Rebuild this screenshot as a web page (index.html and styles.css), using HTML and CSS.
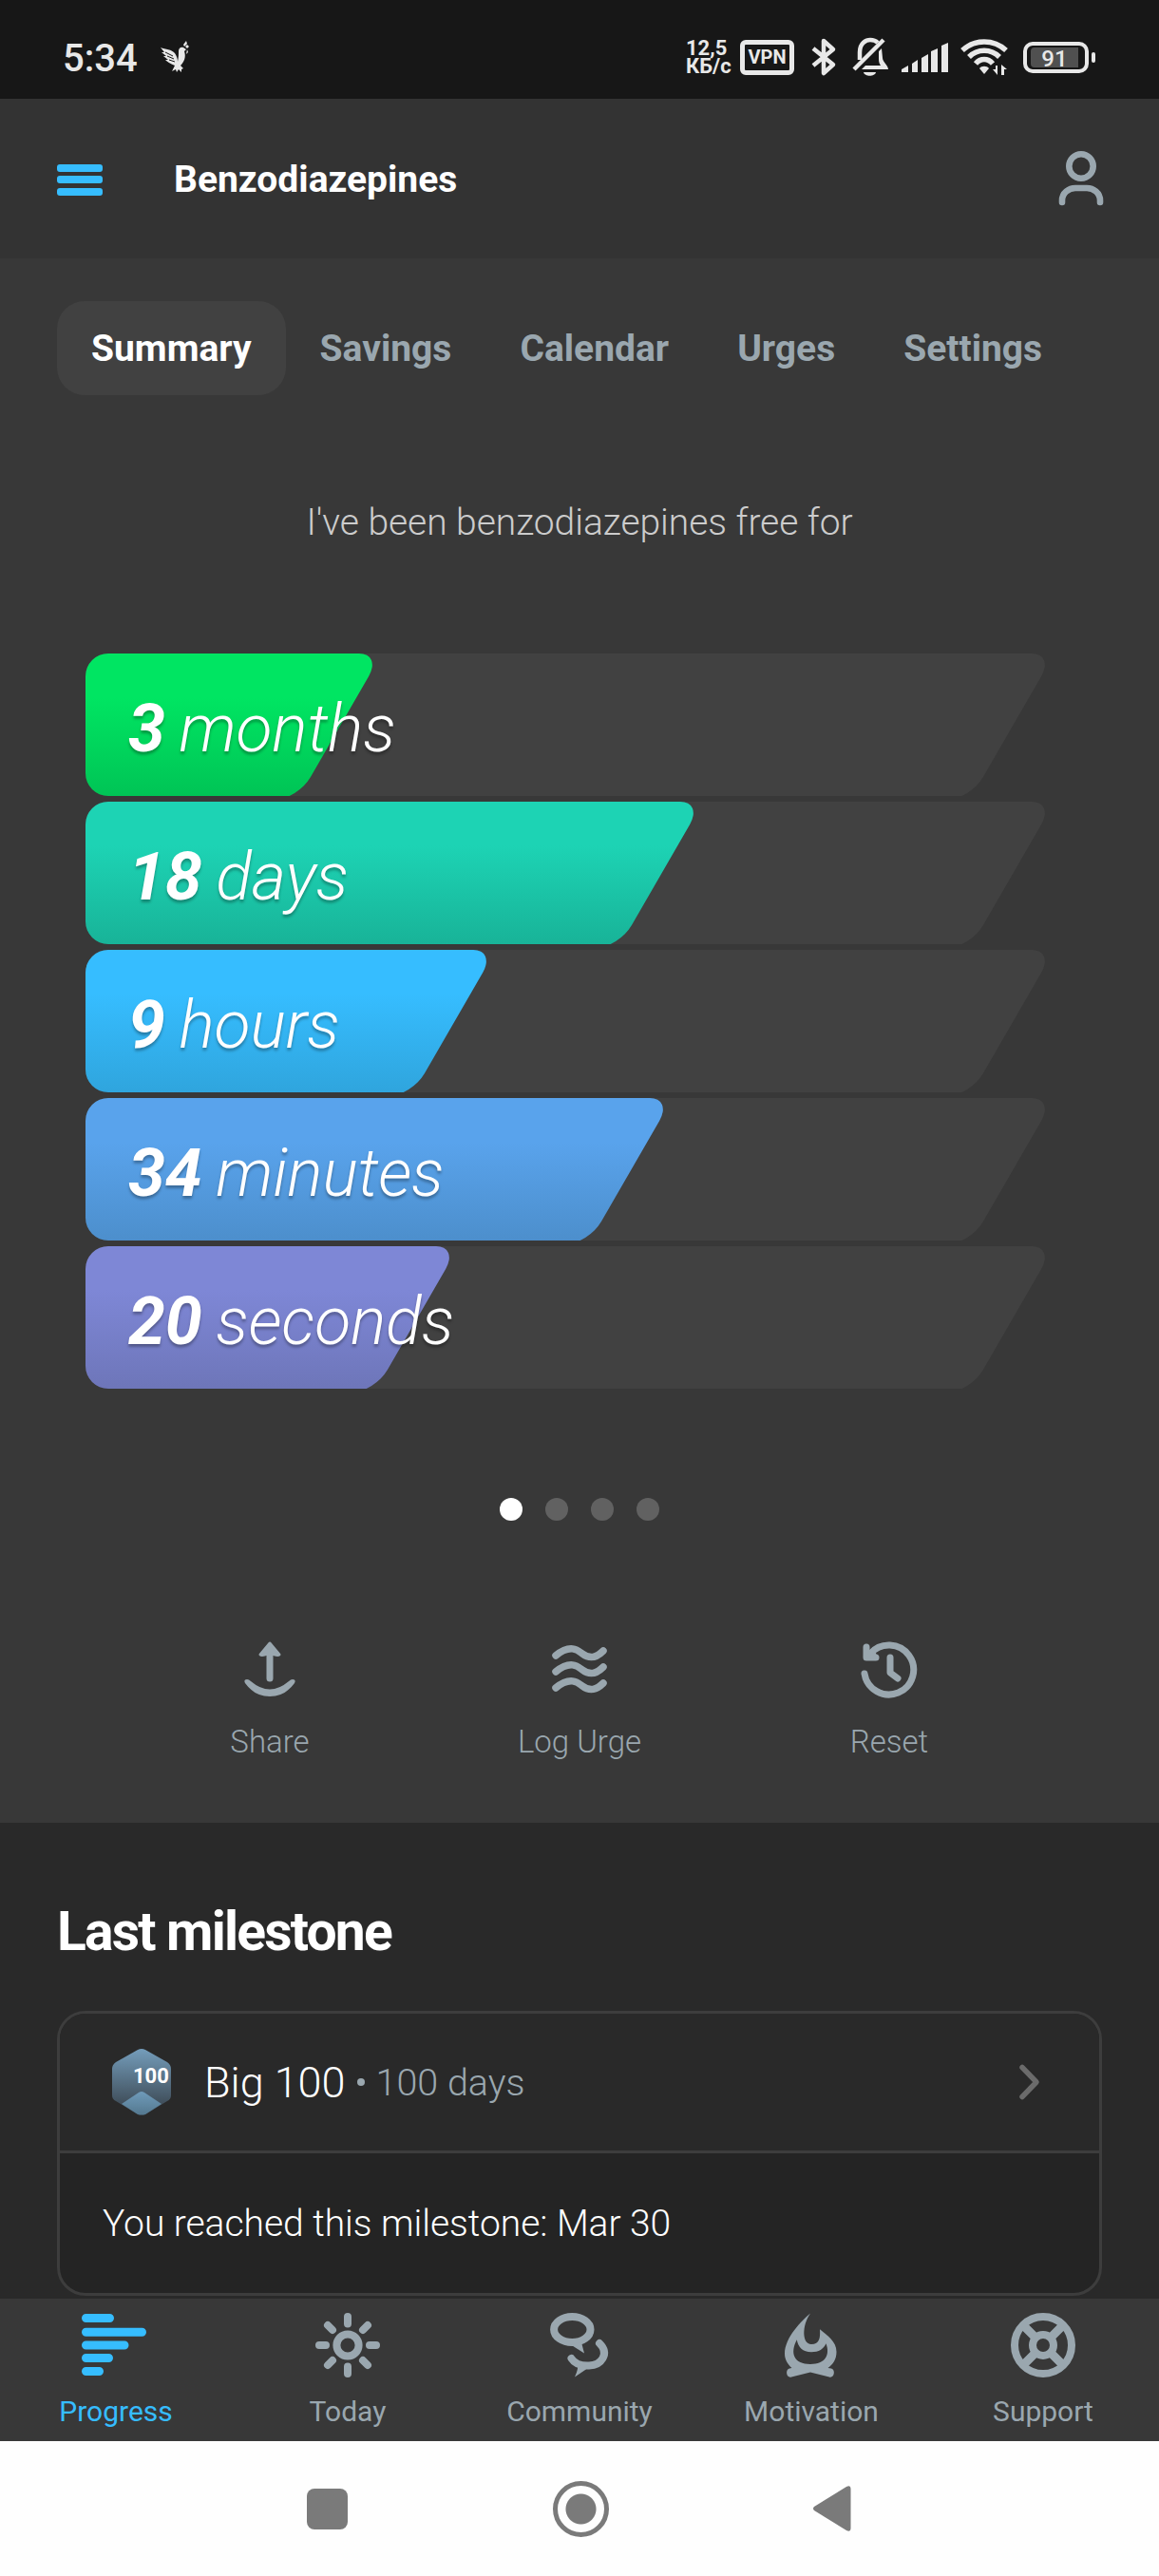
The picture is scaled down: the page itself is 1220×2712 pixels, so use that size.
FILE: index.html
```html
<!DOCTYPE html>
<html lang="en">
<head>
    <meta charset="UTF-8">
    <meta name="viewport" content="width=device-width, initial-scale=1.0">
    <title>Benzodiazepines</title>
    <link rel="stylesheet" href="styles.css">
</head>
<body>
    <div class="status-bar">
        <span class="clock">5:34</span>
        <svg class="dove" width="30" height="34" viewBox="0 0 30 34">
            <path d="M0 7 C5 9 12 9 15 13 C17 16 18 19 18 22 C19 17 19 14 19 11 C19 8 21 6 24 7 L27 9 L25 11 C27 17 25 22 21 26 L24 29 L22 30 L22 33 L19 30 L17 33 L16 30 L12 32 L15 26 C10 24 7 22 5 20 L8 20 L3 16 L6 16 L1 12 L4 12 Z"/>
            <path d="M27 0 L28 3 L25 6 L24 4 Z M28 4 l2 2 -2 2 -2 -2 Z M28 9 l1 3 -2 2 Z"/>
            <path class="feather" d="M5 12 L13 16 M7 16 L14 19 M9 20 L15 22"/>
        </svg>
        <div class="status-icons">
            <div class="net-speed">12,5<br>КБ/с</div>
            <div class="vpn">VPN</div>
            <svg class="bluetooth" width="27" height="42" viewBox="0 0 27 42">
                <path d="M2 12 L23 29 L13 38 L13 4 L23 13 L2 30"/>
            </svg>
            <svg class="bell" width="38" height="42" viewBox="0 0 38 42">
                <path class="line" d="M8 24 L8 16 C8 6 15 3 19 3 C22 3 25 4 27 6"/>
                <path d="M31 12 L32 22 C32 26 38 30 38 34 L10 34 L14 30 L30 30 C28 27 28 25 28 22 L28 15 Z"/>
                <path class="line" d="M2 34 L33 3"/>
                <path d="M12 37 L25 37 C24 42 13 42 12 37 Z"/>
            </svg>
            <svg class="signal" width="49" height="32" viewBox="0 0 49 32">
                <path d="M0 28 L7 24 V31 H0 Z M11 22 L17 18 V31 H11 Z M21 16 L28 12 V31 H21 Z M31 9 L38 6 V31 H31 Z M42 3 L49 0 V31 H42 Z"/>
            </svg>
            <svg class="wifi" width="50" height="38" viewBox="0 0 50 38">
                <path class="line" d="M2 12 C15 0 35 0 48 12 M9 19 C18 10 32 10 41 19 M16 26 C21 20 29 20 34 26"/>
                <path d="M20 31 C22 28 28 28 30 31 L25 37 Z"/>
                <path d="M39 28 V38 L34 32 H37 V28 Z M43 38 V27 L49 32 H46 V38 Z"/>
            </svg>
            <div class="battery"><span>91</span></div>
            <div class="battery-tip"></div>
        </div>
    </div>

    <header class="header">
        <div class="menu"><i></i><i></i><i></i></div>
        <h1>Benzodiazepines</h1>
        <svg class="person" width="48" height="60" viewBox="0 0 48 60">
            <circle cx="24" cy="17" r="12.7"/>
            <path d="M4 55 V53 C4 45 11 40 18 40 H30 C37 40 44 45 44 53 V55"/>
        </svg>
    </header>

    <main class="summary">
        <nav class="tabs">
            <a class="tab active">Summary</a>
            <a class="tab">Savings</a>
            <a class="tab">Calendar</a>
            <a class="tab">Urges</a>
            <a class="tab">Settings</a>
        </nav>

        <p class="intro">I've been benzodiazepines free for</p>

        <div class="bars">
            <div class="bar">
                <div class="shape track"></div>
                <div class="shape months" style="width: 30.6%"></div>
                <div class="label"><b>3</b> months</div>
            </div>
            <div class="bar">
                <div class="shape track"></div>
                <div class="shape days" style="width: 63.7%"></div>
                <div class="label"><b>18</b> days</div>
            </div>
            <div class="bar">
                <div class="shape track"></div>
                <div class="shape hours" style="width: 42.4%"></div>
                <div class="label"><b>9</b> hours</div>
            </div>
            <div class="bar">
                <div class="shape track"></div>
                <div class="shape minutes" style="width: 60.6%"></div>
                <div class="label"><b>34</b> minutes</div>
            </div>
            <div class="bar">
                <div class="shape track"></div>
                <div class="shape seconds" style="width: 38.5%"></div>
                <div class="label"><b>20</b> seconds</div>
            </div>
        </div>

        <div class="dots"><i class="on"></i><i></i><i></i><i></i></div>

        <div class="actions">
            <div class="action">
                <svg width="60" height="60" viewBox="0 0 60 60">
                    <path class="line" d="M30 10 V40"/>
                    <path class="solid" d="M30 3 L40 15 Q38 17 30 13 Q22 17 20 15 Z"/>
                    <path d="M4 45 Q2 41 6 41 Q8 41 10 43 Q30 60 50 43 Q52 41 54 41 Q58 41 56 45 Q46 59 30 59 Q14 59 4 45 Z"/>
                </svg>
                <span>Share</span>
            </div>
            <div class="action">
                <svg width="60" height="60" viewBox="0 0 60 60">
                    <path class="wave" d="M5 16 C21 3 29 11 33 14 C41 20 48 18 55 11"/>
                    <path class="wave" d="M5 33 C21 20 29 28 33 31 C41 37 48 35 55 28"/>
                    <path class="wave" d="M5 50 C21 37 29 45 33 48 C41 54 48 52 55 45"/>
                </svg>
                <span>Log Urge</span>
            </div>
            <div class="action">
                <svg width="60" height="60" viewBox="0 0 60 60">
                    <path class="line" d="M4 35 A26 26 0 1 0 10 14"/>
                    <path class="line" d="M6 7 V18 H16"/>
                    <path class="solid" d="M6 18 L13 9 L16 18 Z"/>
                    <path class="line" d="M31 18 V34 L39 40"/>
                </svg>
                <span>Reset</span>
            </div>
        </div>
    </main>

    <section class="milestone">
        <h2>Last milestone</h2>
        <div class="card">
            <div class="card-head">
                <svg class="badge" width="62" height="70" viewBox="0 0 62 70">
                    <defs>
                        <linearGradient id="hex" x1="0" y1="0" x2="0" y2="1">
                            <stop offset="0" stop-color="#749dbb"/>
                            <stop offset="0.85" stop-color="#3f4d59"/>
                        </linearGradient>
                        <linearGradient id="fold" x1="0" y1="0" x2="0" y2="1">
                            <stop offset="0" stop-color="#6f9bba"/>
                            <stop offset="1" stop-color="#54788f"/>
                        </linearGradient>
                    </defs>
                    <path fill="url(#hex)" d="M27 1 Q31 -1 35 1 L58 14 Q62 17 62 21 V49 Q62 53 58 55 L35 69 Q31 70 27 69 L4 55 Q0 53 0 49 V21 Q0 17 4 14 Z"/>
                    <path fill="url(#fold)" d="M10 58 L28 46 Q31 44 34 46 L52 58 L35 69 Q31 70 27 69 Z"/>
                    <text x="22" y="36">100</text>
                </svg>
                <span class="name">Big 100</span>
                <span class="bullet"></span>
                <span class="sub">100 days</span>
                <svg class="chevron" width="22" height="38" viewBox="0 0 22 38">
                    <path d="M3 3.5 L18 19 L3 34.5"/>
                </svg>
            </div>
            <div class="card-body">You reached this milestone: Mar 30</div>
        </div>
    </section>

    <nav class="tabbar">
        <a class="item active">
            <svg width="68" height="68" viewBox="0 0 68 68">
                <path class="rows" d="M2.5 5.5 H27.5 M2.5 20.2 H61.5 M2.5 34 H43 M2.5 47.5 H26.5 M2.5 61.5 H16.5"/>
            </svg>
            <span>Progress</span>
        </a>
        <a class="item">
            <svg width="68" height="68" viewBox="0 0 68 68">
                <circle cx="34" cy="34" r="11.6"/>
                <path d="M34 4 V11.5 M34 56.5 V64 M4 34 H11 M57 34 H64 M13 13 L18 18 M50 50 L55 55 M55 13 L50 18 M18 50 L13 55"/>
            </svg>
            <span>Today</span>
        </a>
        <a class="item">
            <svg width="68" height="68" viewBox="0 0 68 68">
                <ellipse cx="26.3" cy="17.5" rx="19.2" ry="13.5"/>
                <path class="solid" d="M24 33 L39 42.5 L36 31 Z"/>
                <path d="M55 32 C66 43 57 55 44 55.5 C33 56 28 52 25.5 48"/>
                <path class="solid" d="M32 54 Q33 59 29 67.5 L43 58 Z"/>
            </svg>
            <span>Community</span>
        </a>
        <a class="item">
            <svg width="68" height="68" viewBox="0 0 68 68">
                <path class="solid" fill-rule="evenodd" d="M33 0.5 C24 8 6 26 6 43 C6 49 9 54 13.5 58 L11 58.5 C6 60 8 69 13 67.5 L33 62.5 L53 67.5 C58 69 60 60 55 58.5 L51.5 58 C57 54 60.5 49 60.5 41 C60.5 30 51 24 43 17.3 C43.5 26 43 33 34 33 C24 33 24 13 33 0.5 Z M18.8 28.3 C20 36 25 41.3 34 41.3 C42 41.3 47 38 49.5 32.3 C54 44 49 54 33 54 C16 54 11 43 18.8 28.3 Z"/>
            </svg>
            <span>Motivation</span>
        </a>
        <a class="item">
            <svg width="68" height="68" viewBox="0 0 68 68">
                <circle cx="34" cy="34" r="30"/>
                <circle cx="34" cy="34" r="11"/>
                <path class="spokes" d="M14 14 L26 26 M54 14 L42 26 M14 54 L26 42 M54 54 L42 42"/>
            </svg>
            <span>Support</span>
        </a>
    </nav>

    <div class="system-nav">
        <div class="recents"></div>
        <div class="home"></div>
        <svg class="back" width="40" height="48" viewBox="0 0 40 48">
            <path d="M1 22 Q-1 24 1 26 L35 47 Q39.5 49 39.5 45 V3 Q39.5 -1 35 1 Z"/>
        </svg>
    </div>
</body>
</html>
```
FILE: styles.css
```css
* {
    box-sizing: border-box;
}
body {
    margin: 0;
    width: 1220px;
    font-family: Roboto, sans-serif;
    background: #292929;
    color: #fff;
}
svg {
    display: block;
    overflow: visible;
}

/* status bar */
.status-bar {
    display: flex;
    align-items: center;
    height: 104px;
    padding: 16px 67px 0 66px;
    background: #171717;
    color: #e8e8e8;
}
.status-bar svg {
    fill: #e8e8e8;
}
.status-bar .line {
    fill: none;
    stroke: #e8e8e8;
    stroke-width: 4.5;
}
.clock {
    font-size: 40px;
    font-weight: 500;
    width: 103px;
    padding-top: 3px;
}
.dove .feather {
    stroke: #171717;
    stroke-width: 1;
}
.status-icons {
    display: flex;
    align-items: center;
    margin-left: auto;
}
.net-speed {
    font-size: 22px;
    font-weight: 700;
    line-height: 19px;
    width: 45px;
    margin-right: 12px;
    white-space: nowrap;
}
.vpn {
    width: 57px;
    height: 37px;
    margin-right: 18px;
    border: 5px solid #e8e8e8;
    border-radius: 6px;
    font-size: 20px;
    font-weight: 700;
    line-height: 27px;
    text-align: center;
}
.bluetooth {
    margin-right: 16px;
}
.status-bar .bluetooth path {
    fill: none;
    stroke: #e8e8e8;
    stroke-width: 4.5;
    stroke-linejoin: round;
}
.bell {
    margin-right: 14px;
}
.signal {
    margin: 2px 13px 0 0;
}
.wifi {
    margin-right: 16px;
}
.status-bar .wifi .line {
    stroke-width: 5.5;
}
.battery {
    width: 69px;
    height: 33px;
    padding: 2px;
    border: 4px solid #e8e8e8;
    border-radius: 10px;
}
.battery span {
    display: block;
    width: 50px;
    height: 21px;
    margin-left: 2px;
    border-radius: 4px 0 0 4px;
    background: #505050;
    font-size: 24px;
    font-weight: 500;
    line-height: 24px;
    text-align: center;
}
.battery-tip {
    width: 4px;
    height: 11px;
    margin-left: 3px;
    border-radius: 2px;
    background: #e8e8e8;
}

/* header */
.header {
    display: flex;
    align-items: center;
    height: 168px;
    padding: 0 58px 0 60px;
    background: #333;
}
.menu {
    display: flex;
    flex-direction: column;
    gap: 4.5px;
    width: 48px;
    margin-top: 2px;
}
.menu i {
    height: 8px;
    border-radius: 3px;
    background: #36bdff;
}
.header h1 {
    margin: 0 auto 0 75px;
    padding-top: 2px;
    font-size: 39px;
    font-weight: 700;
}
.person {
    fill: none;
    stroke: #9aa7af;
    stroke-width: 6.6;
    stroke-linecap: round;
}

/* summary */
.summary {
    height: 1647px;
    padding-top: 45px;
    background: #383838;
}
.tabs {
    display: flex;
    padding-left: 60px;
}
.tab {
    height: 99px;
    padding: 0 36px;
    border-radius: 29px;
    font-size: 39px;
    font-weight: 700;
    line-height: 101px;
    color: #9aa7af;
}
.tab.active {
    background: #414141;
    color: #fff;
}
.intro {
    margin: 111px 0 0;
    font-size: 39px;
    font-weight: 300;
    line-height: 46px;
    letter-spacing: -0.05px;
    text-align: center;
    color: #ccc;
}
.bars {
    display: grid;
    gap: 6px;
    margin: 115px 110px 0 90px;
}
.bar {
    display: grid;
    height: 150px;
    border-radius: 24px 0 0 24px;
    overflow: hidden;
}
.bar > div {
    grid-area: 1 / 1;
}
.shape {
    transform: skewX(-30deg);
    transform-origin: right top;
    border-radius: 0 24px 24px 0;
}
.track {
    background: #414141;
}
.months {
    background: linear-gradient(#00e562 30%, #00c355);
}
.days {
    background: linear-gradient(#1dd3b4 30%, #18b297);
}
.hours {
    background: linear-gradient(#36bdff 30%, #2fa4dc);
}
.minutes {
    background: linear-gradient(#59a3ec 30%, #4c8ecb);
}
.seconds {
    background: linear-gradient(#7e87d6 30%, #6d75b8);
}
.label {
    position: relative;
    padding: 4px 0 0 45px;
    font-size: 70px;
    font-weight: 300;
    font-style: italic;
    line-height: 150px;
    letter-spacing: -0.2px;
    text-shadow: 0 3px 3px rgba(0, 0, 0, 0.3);
}
.label b {
    margin-right: -2px;
    font-weight: 700;
}
.dots {
    display: flex;
    justify-content: center;
    gap: 24px;
    margin-top: 115px;
}
.dots i {
    width: 24px;
    height: 24px;
    border-radius: 50%;
    background: #616161;
}
.dots .on {
    background: #fff;
}
.actions {
    display: grid;
    grid-template-columns: repeat(3, 326px);
    justify-content: center;
    margin-top: 126px;
}
.action {
    display: flex;
    flex-direction: column;
    align-items: center;
    gap: 27px;
    font-size: 33px;
    font-weight: 300;
    line-height: 39px;
    color: #9aa7af;
}
.action svg {
    fill: #9aa7af;
}
.action .line, .action .wave {
    fill: none;
    stroke: #9aa7af;
    stroke-width: 7;
    stroke-linecap: round;
    stroke-linejoin: round;
}
.action .solid {
    stroke: #9aa7af;
    stroke-width: 3;
    stroke-linejoin: round;
}
.action .wave {
    stroke-width: 7.5;
}

/* milestone */
.milestone {
    height: 501px;
    padding: 82px 60px 0;
    background: #292929;
}
.milestone h2 {
    margin: 0;
    font-size: 57px;
    font-weight: 700;
    line-height: 66px;
    letter-spacing: -1.8px;
}
.card {
    height: 300px;
    margin-top: 50px;
    border: 3px solid #3d3d3d;
    border-radius: 30px;
    background: #242424;
    overflow: hidden;
}
.card-head {
    display: flex;
    align-items: center;
    height: 147px;
    padding: 0 62px 0 55px;
    border-bottom: 3px solid #3d3d3d;
    background: #292929;
    font-weight: 300;
}
.badge text {
    font-size: 22px;
    font-weight: 700;
    fill: #fff;
}
.card-head .name {
    margin-left: 35px;
    font-size: 45px;
}
.bullet {
    width: 8px;
    height: 8px;
    margin: 0 12px;
    border-radius: 50%;
    background: #9aa7af;
}
.card-head .sub {
    font-size: 39.5px;
    color: #9aa7af;
}
.chevron {
    margin-left: auto;
    fill: none;
    stroke: #6b6b6b;
    stroke-width: 5.5;
    stroke-linecap: round;
    stroke-linejoin: round;
}
.card-body {
    padding-left: 45px;
    font-size: 39px;
    font-weight: 300;
    line-height: 149px;
    letter-spacing: -0.04px;
}

/* bottom tabs */
.tabbar {
    display: grid;
    grid-template-columns: repeat(5, 1fr);
    height: 150px;
    padding-top: 15px;
    background: #383838;
}
.item {
    display: flex;
    flex-direction: column;
    align-items: center;
    gap: 17px;
    font-size: 30px;
    line-height: 38px;
    color: #9aa7af;
}
.item svg {
    fill: none;
    stroke: #9aa7af;
    stroke-width: 8;
    stroke-linecap: round;
}
.item .solid {
    fill: #9aa7af;
    stroke: none;
}
.item .spokes {
    stroke-linecap: butt;
    stroke-width: 9;
}
.item .rows {
    stroke: #36bdff;
    stroke-width: 9;
}
.item.active {
    color: #36bdff;
}

/* android buttons */
.system-nav {
    display: flex;
    align-items: center;
    height: 142px;
    padding: 0 324px 0 323px;
    justify-content: space-between;
    background: #fefefe;
}
.recents {
    width: 43px;
    height: 43px;
    border-radius: 8px;
    background: #7a7a7a;
}
.home {
    width: 59px;
    height: 59px;
    border: 5.5px solid #7a7a7a;
    border-radius: 50%;
    background: radial-gradient(circle, #7a7a7a 15.5px, transparent 16.5px);
}
.back {
    fill: #7a7a7a;
}
```
